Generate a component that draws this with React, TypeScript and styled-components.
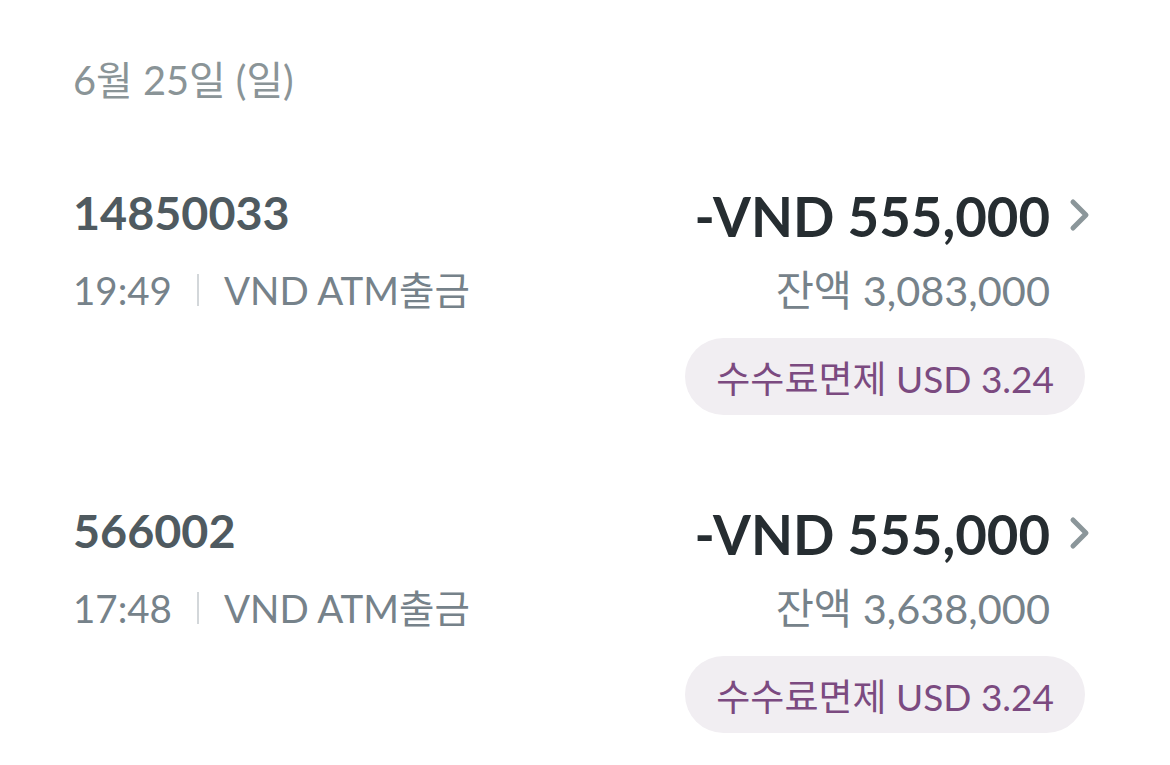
import styled, { createGlobalStyle } from 'styled-components'

const GlobalStyle = createGlobalStyle`
    body {
        margin: 0;
        background: #fff;
        font-family: Lato, 'Noto Sans CJK KR', sans-serif;
    }
`

type Tx = {
    id: string
    time: string
    kind: string
    amount: string
    balance: string
    fee: string
}

const items: Tx[] = [
    { id: '14850033', time: '19:49', kind: 'VND ATM출금', amount: '-VND 555,000', balance: '잔액 3,083,000', fee: '수수료면제 USD 3.24' },
    { id: '566002', time: '17:48', kind: 'VND ATM출금', amount: '-VND 555,000', balance: '잔액 3,638,000', fee: '수수료면제 USD 3.24' },
]

const Chevron = () => (
    <svg width='24' height='36' viewBox='0 0 24 36'>
        <path d='M5 5 L18 18 L5 31' fill='none' stroke='#8b969a' strokeWidth='5' strokeLinecap='round' strokeLinejoin='round' />
    </svg>
)

export default function App() {
    return (
        <>
            <GlobalStyle />
            <Page>
                <DateLabel>6월 25일 (일)</DateLabel>
                {items.map((tx) => (
                    <Row key={tx.id}>
                        <Left>
                            <Title>{tx.id}</Title>
                            <Meta>
                                <span>{tx.time}</span>
                                <Divider />
                                <span>{tx.kind}</span>
                            </Meta>
                        </Left>
                        <Right>
                            <AmountLine>
                                <Amount>{tx.amount}</Amount>
                                <Chevron />
                            </AmountLine>
                            <Balance>{tx.balance}</Balance>
                            <Badge>{tx.fee}</Badge>
                        </Right>
                    </Row>
                ))}
            </Page>
        </>
    )
}

const Page = styled.div`
    width: 1170px;
    height: 765px;
    box-sizing: border-box;
    padding: 52px 78px 0 73px;
    overflow: hidden;
`

const DateLabel = styled.div`
    font-size: 39.8px;
    line-height: 56px;
    color: #8a9497;
    margin-bottom: 74px;
`

const Row = styled.div`
    display: flex;
    justify-content: space-between;
    align-items: flex-start;
    margin-bottom: 85px;
`

const Left = styled.div`
    display: flex;
    flex-direction: column;
`

const Title = styled.div`
    font-size: 46.7px;
    font-weight: 700;
    line-height: 60px;
    color: #4f5a60;
`

const Meta = styled.div`
    display: flex;
    align-items: center;
    font-size: 38.5px;
    line-height: 60px;
    color: #76828a;
    margin-top: 18px;
`

const Divider = styled.i`
    width: 2px;
    height: 32px;
    background: #d3d7da;
    margin: 0 25px;
`

const Right = styled.div`
    display: flex;
    flex-direction: column;
    align-items: flex-end;
`

const AmountLine = styled.div`
    display: flex;
    align-items: center;
    gap: 18px;
`

const Amount = styled.div`
    font-size: 54.5px;
    font-weight: 700;
    line-height: 64px;
    color: #262d31;
    margin-top: 2px;
`

const Balance = styled.div`
    font-size: 41.5px;
    line-height: 56px;
    color: #76828a;
    margin: 14px 42px 0 0;
`

const Badge = styled.div`
    margin: 20px 7px 0 0;
    padding: 0 31px;
    height: 77px;
    display: flex;
    align-items: center;
    border-radius: 39px;
    background: #f1eef2;
    color: #7b4a80;
    font-size: 37px;
`
